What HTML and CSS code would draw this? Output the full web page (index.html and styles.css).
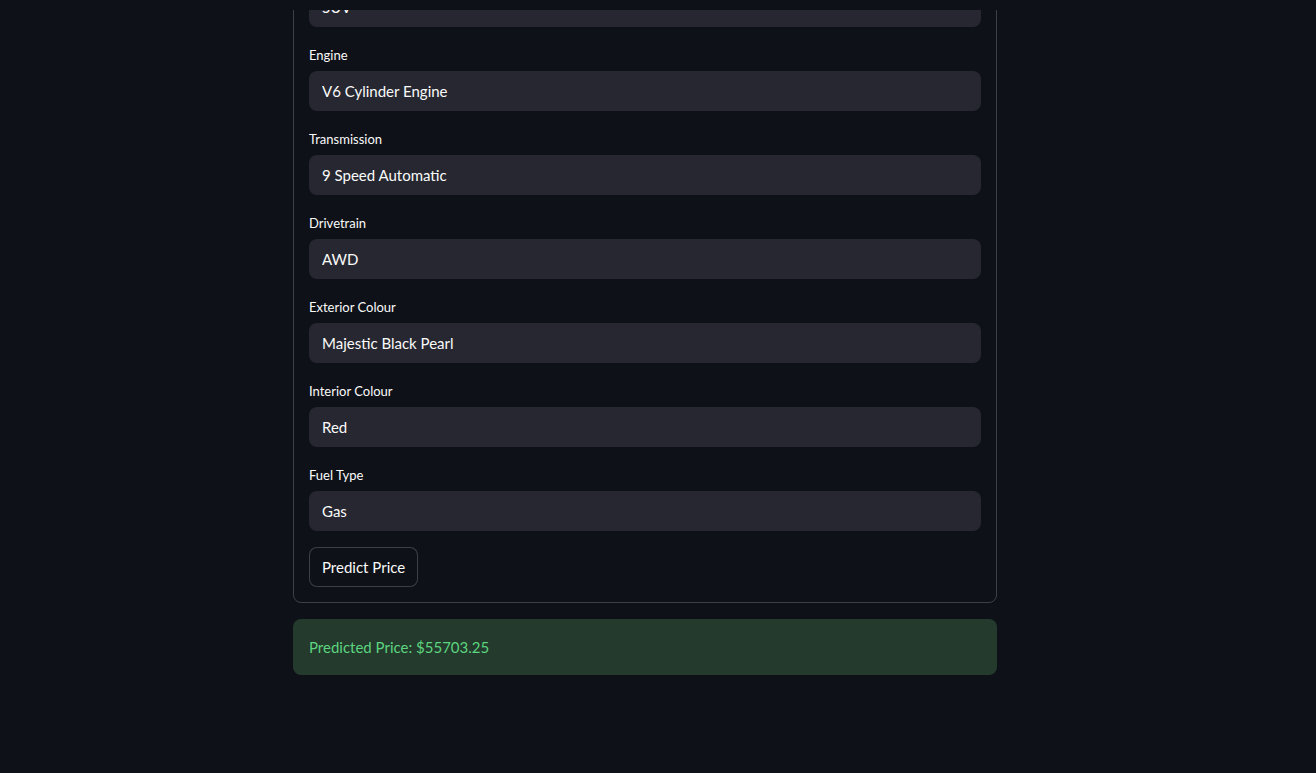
FILE: index.html
```html
<!DOCTYPE html>
<html lang="en">
<head>
    <meta charset="UTF-8">
    <meta name="viewport" content="width=device-width, initial-scale=1.0">
    <title>Car Price Predictor</title>
    <link rel="stylesheet" href="styles.css">
</head>
<body>
    <div class="top-bar"></div>
    <div class="page">
        <div class="main">
            <form class="form">
                <div class="field">
                    <label>Body Type</label>
                    <input type="text" value="SUV">
                </div>
                <div class="field">
                    <label>Engine</label>
                    <input type="text" value="V6 Cylinder Engine">
                </div>
                <div class="field">
                    <label>Transmission</label>
                    <input type="text" value="9 Speed Automatic">
                </div>
                <div class="field">
                    <label>Drivetrain</label>
                    <input type="text" value="AWD">
                </div>
                <div class="field">
                    <label>Exterior Colour</label>
                    <input type="text" value="Majestic Black Pearl">
                </div>
                <div class="field">
                    <label>Interior Colour</label>
                    <input type="text" value="Red">
                </div>
                <div class="field">
                    <label>Fuel Type</label>
                    <input type="text" value="Gas">
                </div>
                <div>
                    <button type="button" class="btn">Predict Price</button>
                </div>
            </form>

            <div class="success">Predicted Price: $55703.25</div>
        </div>
    </div>
</body>
</html>
```
FILE: styles.css
```css
* {
    margin: 0;
    padding: 0;
    box-sizing: border-box;
}
html, body {
    height: 100%;
    overflow: hidden;
}
body {
    font-family: 'Lato', 'Open Sans', sans-serif;
    background-color: #0e1117;
    color: #fafafa;
}
.top-bar {
    position: fixed;
    top: 0;
    left: 0;
    right: 0;
    height: 10px;
    background-color: #0e1117;
    z-index: 10;
}
.page {
    padding-right: 26px;
}
.main {
    width: 704px;
    margin: -57px auto 0;
    display: flex;
    flex-direction: column;
    gap: 16px;
}
.form {
    border: 1px solid rgba(250, 250, 250, 0.2);
    border-radius: 8px;
    padding: 15px;
    display: flex;
    flex-direction: column;
    gap: 16px;
}
.field label {
    display: flex;
    align-items: center;
    height: 24px;
    margin-bottom: 4px;
    font-size: 13px;
    color: #fafafa;
}
.field input {
    display: block;
    width: 100%;
    height: 40px;
    border: 1px solid transparent;
    border-radius: 8px;
    background-color: #262730;
    color: #fafafa;
    font-family: inherit;
    font-size: 15px;
    padding: 0 12px;
    outline: none;
}
.btn {
    height: 40px;
    padding: 0 12px;
    border: 1px solid rgba(250, 250, 250, 0.2);
    border-radius: 8px;
    background-color: #0e1117;
    color: #fafafa;
    font-family: inherit;
    font-size: 15px;
}
.success {
    background-color: #233a2d;
    color: #5dd47f;
    border-radius: 8px;
    padding: 16px;
    font-size: 15px;
    line-height: 24px;
}
```
